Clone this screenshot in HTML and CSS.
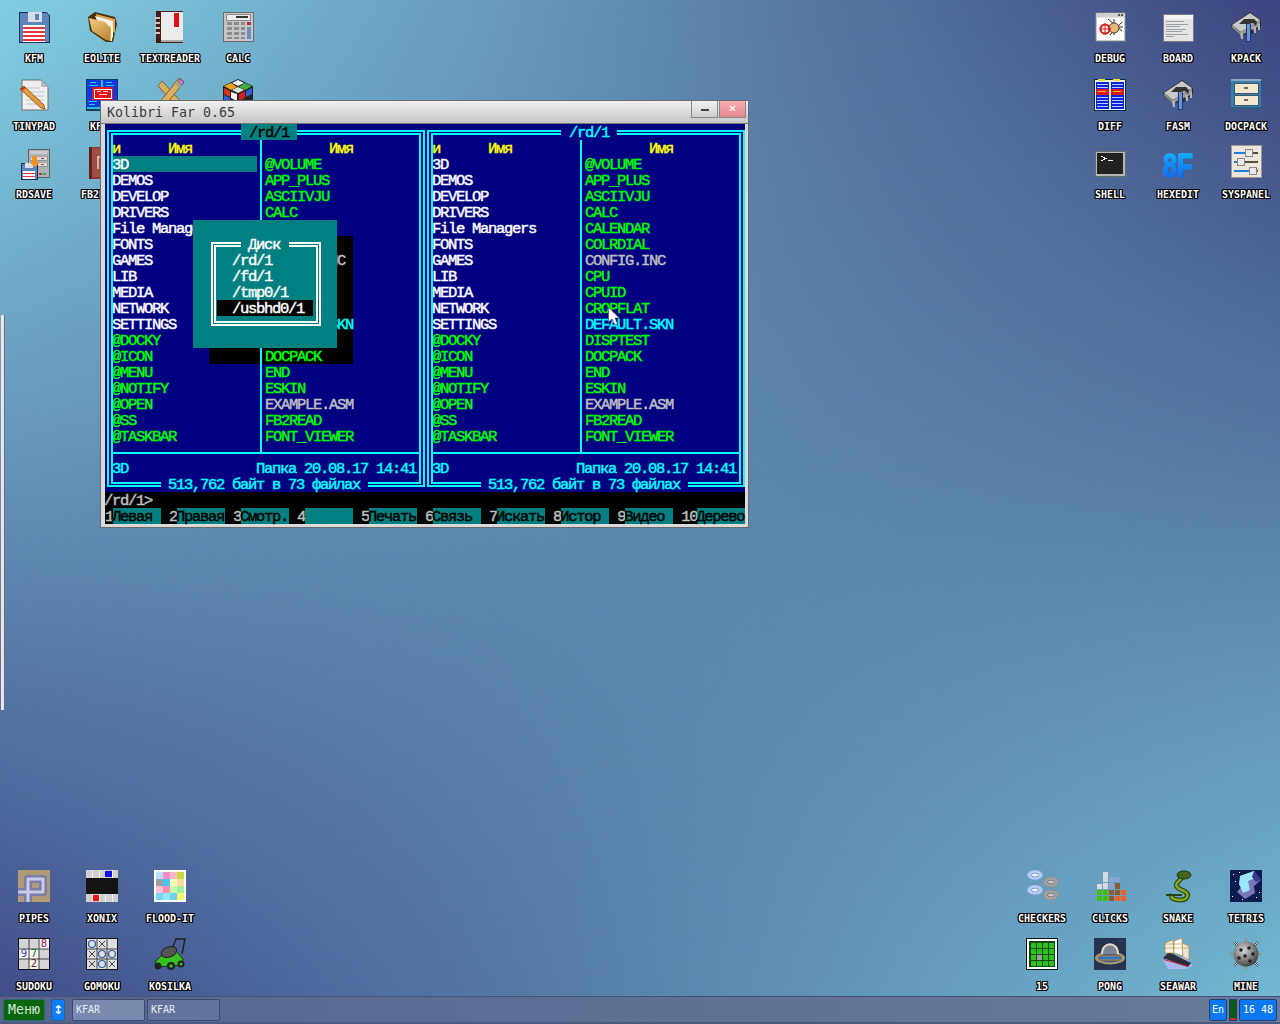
FILE: index.html
```html
<!DOCTYPE html>
<html lang="ru">
<head>
<meta charset="utf-8">
<title>KolibriOS</title>
<link rel="stylesheet" href="styles.css">
</head>
<body>
<div class="desktop">

<svg class="defs" width="0" height="0">
  <defs>
    <linearGradient id="gFolder" x1="0" y1="0" x2="0.6" y2="1"><stop offset="0" stop-color="#f2cf85"/><stop offset="1" stop-color="#c08a38"/></linearGradient>
    <linearGradient id="gHex" x1="0" y1="0" x2="0" y2="1"><stop offset="0" stop-color="#14c0ff"/><stop offset="1" stop-color="#0a58f0"/></linearGradient>
    <radialGradient id="gMine" cx="0.4" cy="0.35" r="0.7"><stop offset="0" stop-color="#d8d8d8"/><stop offset="1" stop-color="#3c3c3c"/></radialGradient>
    <radialGradient id="gBlue" cx="0.5" cy="0.5" r="0.6"><stop offset="0" stop-color="#ffffff"/><stop offset="1" stop-color="#8aa8e8"/></radialGradient>
    <radialGradient id="gGray" cx="0.5" cy="0.5" r="0.6"><stop offset="0" stop-color="#d0d0d0"/><stop offset="1" stop-color="#808080"/></radialGradient>
    <symbol id="hammer" viewBox="0 0 32 32">
      <path d="M1 14 L20 1 L31 9 L31 15 L26 19 L22 23 L12 24 L2 18 Z" fill="#2a2a2a"/>
      <path d="M2 14 L20 2 L30 9 L11 21 Z" fill="#c8c8c8"/>
      <path d="M2 14 L11 21 L11 24 L2 17 Z" fill="#8c8c8c"/>
      <path d="M11 21 L30 9 L30 15 L11 24 Z" fill="#9a9a9a"/>
      <path d="M9 13 L14 8 L24 8 L27 11 L26 15 L23 12 L19 13 L14 13 Z" fill="#333"/>
      <rect x="16" y="13" width="5" height="18" fill="#1c3a78"/>
      <rect x="17" y="13" width="3" height="17" fill="#6a94d8"/>
      <path d="M10 22 h3 v6 h-2 z M23 16 h3 v6 h-2 z M28 13 h2 v6 h-2 z" fill="#b4b4b4"/>
    </symbol>
  </defs>
</svg>

<div class="strip"></div>

<!-- top left -->
<div class="icons icons-tl">
  <div class="icon">
    <svg class="ico" viewBox="0 0 32 32" shape-rendering="crispEdges"><path d="M1 1 H28 L31 4 V31 H1 Z" fill="#5c84bd" stroke="#17315c"/><rect x="10" y="1" width="14" height="10" fill="#d8dde6"/><rect x="17" y="3" width="4" height="6" fill="#5c84bd"/><rect x="5" y="14" width="22" height="17" fill="#fff"/><path d="M5 16h22v2H5zM5 20h22v2H5zM5 24h22v2H5zM5 28h22v2H5z" fill="#e5343a"/></svg>
    <span class="label">KFM</span>
  </div>
  <div class="icon">
    <svg class="ico" viewBox="0 0 32 32"><path d="M2 6 L9 1 L13 2 L29 6 L31 13 L27 31 L20 31 L4 20 Z" fill="#4c3008"/><path d="M10 3 L29 8 L29 22 L12 14 Z" fill="#d9a655"/><path d="M9 5 L27 10 L27 27 L12 12 Z" fill="#f6f3e6"/><path d="M3 7 L19 11 L25 17 L25 30 L20 29 L6 20 Z" fill="url(#gFolder)"/><path d="M25 15 L27 17 L26 30 L24.500 30 Z" fill="#fff8e0"/></svg>
    <span class="label">EOLITE</span>
  </div>
  <div class="icon">
    <svg class="ico" viewBox="0 0 32 32" shape-rendering="crispEdges"><rect x="2" y="0" width="27" height="32" fill="#4a1a14"/><rect x="7" y="1" width="22" height="28" fill="#ececec"/><rect x="7" y="29" width="22" height="2" fill="#a8a8a8"/><rect x="20" y="2" width="5" height="14" fill="#e3101a"/><path d="M1 6h5v2H1zM1 11h5v2H1zM1 16h5v2H1zM1 21h5v2H1z" fill="#c8c8c8"/></svg>
    <span class="label">TEXTREADER</span>
  </div>
  <div class="icon">
    <svg class="ico" viewBox="0 0 32 32" shape-rendering="crispEdges"><rect x="1" y="1" width="30" height="29" fill="#c6c6c6" stroke="#6c6c6c"/><rect x="4" y="3" width="24" height="6" fill="#ececec" stroke="#8a8a8a"/><rect x="14" y="5" width="12" height="2" fill="#333"/><path d="M5 11h5v3H5zM12 11h5v3h-5zM5 16h5v3H5zM12 16h5v3h-5zM5 21h5v3H5zM12 21h5v3h-5zM5 26h5v2H5zM12 26h5v2h-5zM19 16h4v3h-4zM19 21h4v3h-4zM19 26h4v2h-4zM19 11h4v3h-4z" fill="#8c8c8c"/><rect x="25" y="11" width="4" height="3" fill="#b83030"/><rect x="25" y="16" width="4" height="12" fill="#6a90c8"/></svg>
    <span class="label">CALC</span>
  </div>
  <div class="icon">
    <svg class="ico" viewBox="0 0 32 32"><path d="M4 1 H23 L30 8 V31 H4 Z" fill="#efefef" stroke="#707070"/><path d="M23 1 V8 H30 Z" fill="#bdbdbd"/><path d="M8 9H22M8 13H26M8 17H26M8 21H26M8 25H26" stroke="#c4c4c4"/><path d="M2 10 L6 7 L26 26 L27 30 L23 29 Z" fill="#e89a3a" stroke="#7a4a18" stroke-width=".8"/><path d="M2 10 L6 7 L8 9 L4 12 Z" fill="#c84030"/></svg>
    <span class="label">TINYPAD</span>
  </div>
  <div class="icon">
    <svg class="ico" viewBox="0 0 32 32" shape-rendering="crispEdges"><rect x="0" y="0" width="32" height="32" fill="#0a3f5a"/><rect x="1" y="1" width="30" height="29" fill="#0c38e8"/><path d="M15 1h2v29h-2z" fill="#22c0e0"/><path d="M1 28h30v2H1z" fill="#22c0d0"/><path d="M4 3h6v1H4zM20 3h6v1h-6zM3 6h9v1H3zM20 6h8v1h-8zM3 22h8v1H3zM21 22h8v1h-8zM3 25h6v1H3z" fill="#20d0e0"/><rect x="6" y="8" width="21" height="13" fill="#e21818"/><rect x="8" y="10" width="17" height="9" fill="none" stroke="#fff"/><path d="M11 12h4v1h-4zM17 12h5v1h-5zM13 15h8v1h-8z" fill="#ffd0d0"/></svg>
    <span class="label">KFAR</span>
  </div>
  <div class="icon">
    <svg class="ico" viewBox="0 0 32 32"><path d="M4 7 L8 2 L30 26 L26 31 Z" fill="#d8b060" stroke="#6c4c18" stroke-width=".8"/><path d="M30 3 L25 -1 L5 24 L3 31 L10 28 Z" fill="#d8b060" stroke="#6c4c18" stroke-width=".8"/><path d="M30 3 L26 0 L24 3 L28 6 Z" fill="#d080d0" stroke="#503050" stroke-width=".6"/><path d="M24 3 L28 6 L26 9 L22 6 Z" fill="#a0a0a0"/></svg>
    <span class="label">DEVELOP</span>
  </div>
  <div class="icon">
    <svg class="ico" viewBox="0 0 32 32"><path d="M16 0 L31 7 V24 L16 32 L1 24 V7 Z" fill="#222"/><path d="M16 1 L22 4 L16 7 L10 4 Z" fill="#f4f4f4"/><path d="M23 4 L30 7 L23 11 L17 8 Z" fill="#40b040"/><path d="M9 4 L15 8 L9 11 L2 7 Z" fill="#f0a020"/><path d="M16 8 L22 11 L16 14 L10 11 Z" fill="#d8e8d8"/><path d="M2 9 L8 12 V18 L2 15 Z" fill="#e03020"/><path d="M9 13 L15 15 V22 L9 19 Z" fill="#f4f4f4"/><path d="M17 15 L23 12 V19 L17 22 Z" fill="#d02020"/><path d="M24 12 L30 9 V15 L24 18 Z" fill="#3060d0"/><path d="M2 16 L8 19 V24 L2 21 Z" fill="#3060d0"/></svg>
    <span class="label">DEVELOP</span>
  </div>
  <div class="icon">
    <svg class="ico" viewBox="0 0 32 32" shape-rendering="crispEdges"><rect x="10" y="2" width="21" height="28" fill="#aeb2b6" stroke="#5c6268"/><rect x="12" y="4" width="17" height="3" fill="#c8ccd0"/><rect x="12" y="9" width="17" height="4" fill="#d8dadc" stroke="#70757a" stroke-width=".5"/><rect x="12" y="15" width="17" height="4" fill="#d8dadc" stroke="#70757a" stroke-width=".5"/><path d="M23 11h3v1h-3zM23 17h3v1h-3z" fill="#c03030"/><rect x="21" y="26" width="3" height="2" fill="#c03030"/><rect x="25" y="26" width="3" height="2" fill="#30b040"/><path d="M3 16H17L19 18V32H3Z" fill="#5c84bd" stroke="#17315c"/><rect x="7" y="16" width="8" height="5" fill="#d8dde6"/><rect x="5" y="24" width="12" height="8" fill="#fff"/><path d="M5 26h12v1H5zM5 29h12v1H5z" fill="#e5343a"/><path d="M14 9h5v6h3l-5 6-5-6h2z" fill="#f09020"/></svg>
    <span class="label">RDSAVE</span>
  </div>
  <div class="icon">
    <svg class="ico" viewBox="0 0 32 32" shape-rendering="crispEdges"><rect x="3" y="0" width="26" height="32" fill="#8a3c32"/><rect x="5" y="1" width="22" height="29" fill="#a04c40"/><rect x="3" y="0" width="3" height="32" fill="#5c221c"/><rect x="11" y="9" width="7" height="2" fill="#e0b0a0"/><rect x="11" y="9" width="2" height="13" fill="#e0b0a0"/></svg>
    <span class="label">FB2READ</span>
  </div>
</div>

<!-- top right -->
<div class="icons icons-tr">
  <div class="icon">
    <svg class="ico" viewBox="0 0 32 32"><rect x="2" y="2" width="29" height="28" fill="#fff" stroke="#8a8a8a"/><rect x="2.500" y="2.500" width="28" height="4" fill="#cfcfcf"/><rect x="24" y="3" width="2" height="2" fill="#555"/><rect x="27" y="3" width="2" height="2" fill="#555"/><path d="M14 8 L28 20 M28 11 L16 24 M20 8 V24 M14 16 H29" stroke="#222" stroke-width="1"/><ellipse cx="20" cy="17" rx="5" ry="5" fill="#e0b878" stroke="#5a3c18"/><circle cx="11" cy="18" r="4.500" fill="none" stroke="#e01818" stroke-width="2"/><path d="M11 12 V24 M5 18 H17" stroke="#e01818"/></svg>
    <span class="label">DEBUG</span>
  </div>
  <div class="icon">
    <svg class="ico" viewBox="0 0 32 32" shape-rendering="crispEdges"><rect x="1" y="3" width="30" height="27" fill="#e4e4e4" stroke="#7c7c7c"/><rect x="1.500" y="3.500" width="29" height="4" fill="#f4f4f4"/><path d="M4 10h18v1H4zM4 13h22v1H4zM4 15h14v1H4zM4 18h20v1H4zM4 20h16v1H4zM4 23h22v1H4zM4 25h8v1H4z" fill="#9aa0aa"/></svg>
    <span class="label">BOARD</span>
  </div>
  <div class="icon">
    <svg class="ico"><use href="#hammer"/></svg>
    <span class="label">KPACK</span>
  </div>
  <div class="icon">
    <svg class="ico" viewBox="0 0 32 32" shape-rendering="crispEdges"><rect x="0" y="0" width="32" height="32" fill="#0a2a4a"/><rect x="1" y="1" width="30" height="30" fill="#e8f0f8"/><rect x="2" y="3" width="13" height="27" fill="#0c20e0"/><rect x="17" y="3" width="13" height="27" fill="#0c20e0"/><path d="M4 0h7v2H4zM19 0h7v2h-7z" fill="#e8e020"/><rect x="2" y="10" width="13" height="6" fill="#e01818"/><rect x="17" y="10" width="13" height="6" fill="#e01818"/><path d="M3 5h11v1H3zM18 5h11v1H18zM3 8h11v1H3zM18 8h11v1H18zM3 18h11v1H3zM18 18h11v1H18zM3 21h11v1H3zM18 21h11v1H18zM3 24h11v1H3zM18 24h11v1H18zM3 27h11v1H3zM18 27h11v1H18z" fill="#b8d0ff"/><path d="M4 12h8v1H4zM19 12h8v1h-8z" fill="#f0c020"/></svg>
    <span class="label">DIFF</span>
  </div>
  <div class="icon">
    <svg class="ico"><use href="#hammer"/></svg>
    <span class="label">FASM</span>
  </div>
  <div class="icon">
    <svg class="ico" viewBox="0 0 32 32" shape-rendering="crispEdges"><rect x="1" y="0" width="30" height="30" fill="#3c7ca8"/><rect x="1" y="0" width="30" height="2" fill="#88a8c0"/><rect x="1" y="28" width="30" height="2" fill="#2c5c80"/><path d="M3 30h4v2H3zM25 30h4v2h-4z" fill="#2c5c80"/><rect x="4" y="4" width="24" height="10" fill="#f2e8d0" stroke="#3a5870"/><rect x="4" y="16" width="24" height="10" fill="#f2e8d0" stroke="#3a5870"/><rect x="14" y="8" width="4" height="2" fill="#6a6a6a"/><rect x="14" y="20" width="4" height="2" fill="#6a6a6a"/></svg>
    <span class="label">DOCPACK</span>
  </div>
  <div class="icon">
    <svg class="ico" viewBox="0 0 32 32" shape-rendering="crispEdges"><rect x="1" y="4" width="30" height="25" fill="#b6b6b6" stroke="#6a6a6a"/><rect x="3" y="6" width="26" height="21" fill="#222"/><path d="M7 9h2v1h2v1h2v1h-2v1H9v1H7v-1h2v-1h1v-1H9v-1H7zM14 13h5v1h-5z" fill="#f4f4f4"/></svg>
    <span class="label">SHELL</span>
  </div>
  <div class="icon">
    <svg class="ico" viewBox="0 0 32 32"><text class="hex-logo" x="1" y="30" textLength="30" lengthAdjust="spacingAndGlyphs" fill="url(#gHex)" stroke="url(#gHex)">8F</text></svg>
    <span class="label">HEXEDIT</span>
  </div>
  <div class="icon">
    <svg class="ico" viewBox="0 0 32 32" shape-rendering="crispEdges"><rect x="1" y="-2" width="30" height="32" fill="#ece6dc" stroke="#a09a90"/><rect x="4" y="5" width="24" height="2" fill="#5a4a3a"/><rect x="4" y="5" width="13" height="2" fill="#1c80e0"/><rect x="4" y="14" width="24" height="2" fill="#5a4a3a"/><rect x="4" y="14" width="6" height="2" fill="#1c80e0"/><rect x="4" y="23" width="24" height="2" fill="#5a4a3a"/><rect x="4" y="23" width="17" height="2" fill="#1c80e0"/><rect x="15" y="2" width="7" height="7" fill="#e8e8e8" stroke="#8a8a8a"/><rect x="7" y="11" width="7" height="7" fill="#e8e8e8" stroke="#8a8a8a"/><rect x="19" y="20" width="7" height="7" fill="#e8e8e8" stroke="#8a8a8a"/></svg>
    <span class="label">SYSPANEL</span>
  </div>
</div>

<!-- bottom left -->
<div class="icons icons-bl">
  <div class="icon">
    <svg class="ico" viewBox="0 0 32 32"><rect width="32" height="32" fill="#ae9a74"/><path d="M10 32 V9 H25 V22 H0" fill="none" stroke="#7a7ea6" stroke-width="8" stroke-linejoin="round"/><path d="M10 32 V9 H25 V22 H0" fill="none" stroke="#c8cce8" stroke-width="3" stroke-linejoin="round"/></svg>
    <span class="label">PIPES</span>
  </div>
  <div class="icon">
    <svg class="ico" viewBox="0 0 32 32" shape-rendering="crispEdges"><rect width="32" height="32" fill="#d0d0d0"/><rect y="8" width="32" height="16" fill="#141414"/><path d="M6.500 0v8M13 0v8M19.500 0v8M26 0v8M6.500 24v8M13 24v8M19.500 24v8M26 24v8" stroke="#f4f4f4"/><rect x="19" y="1" width="7" height="6" fill="#1010f0"/><rect x="7" y="25" width="6" height="6" fill="#f01010"/></svg>
    <span class="label">XONIX</span>
  </div>
  <div class="icon">
    <svg class="ico" viewBox="0 0 32 32" shape-rendering="crispEdges"><rect width="32" height="32" fill="#fff"/><path d="M2 2h7v7H2z" fill="#b8e0ff"/><path d="M9 2h7v7H9z" fill="#ff90c0"/><path d="M16 2h7v7h-7z" fill="#ffb8d0"/><path d="M23 2h7v7h-7z" fill="#c8d840"/><path d="M2 9h7v7H2z" fill="#a0a0a0"/><path d="M9 9h7v7H9z" fill="#40c8f8"/><path d="M16 9h7v7h-7z" fill="#ffffb0"/><path d="M23 9h7v7h-7z" fill="#ffd8a0"/><path d="M2 16h7v7H2z" fill="#ffc0d8"/><path d="M9 16h7v7H9z" fill="#ff90b0"/><path d="M16 16h7v7h-7z" fill="#c0ffb0"/><path d="M23 16h7v7h-7z" fill="#a0f0a0"/><path d="M2 23h7v7H2z" fill="#70d8f0"/><path d="M9 23h7v7H9z" fill="#90e8f8"/><path d="M16 23h7v7h-7z" fill="#70d0f0"/><path d="M23 23h7v7h-7z" fill="#f8f870"/></svg>
    <span class="label">FLOOD-IT</span>
  </div>
  <div class="icon">
    <svg class="ico" viewBox="0 0 32 32"><rect width="32" height="32" fill="#101010"/><rect x="1" y="1" width="30" height="30" fill="#f4f4f4"/><path d="M1 1h10v10H1zM21 11h10v10H21zM1 21h10v10H1zM21 21h10v10H21zM11 1h10v10H11z" fill="#d4d4d4"/><path d="M11 0v32M21 0v32M0 11h32M0 21h32" stroke="#404040"/><text class="sudoku" x="26" y="9" fill="#a02050">8</text><text class="sudoku" x="6" y="19" fill="#3050a0">9</text><text class="sudoku" x="16" y="19" fill="#207030">7</text><text class="sudoku" x="16" y="29" fill="#802020">2</text></svg>
    <span class="label">SUDOKU</span>
  </div>
  <div class="icon">
    <svg class="ico" viewBox="0 0 32 32"><rect width="32" height="32" fill="#101010"/><rect x="1" y="1" width="30" height="30" fill="#dedede"/><path d="M11 0v32M21 0v32M0 11h32M0 21h32" stroke="#404040"/><g fill="none" stroke="#2c5ca8" stroke-width="1.200"><circle cx="6" cy="6" r="3.500"/><circle cx="16" cy="16" r="3.500"/><circle cx="26" cy="16" r="3.500"/><circle cx="16" cy="26" r="3.500"/></g><path d="M13 3l6 6m0-6l-6 6M3 13l6 6m0-6l-6 6M3 23l6 6m0-6l-6 6M23 23l6 6m0-6l-6 6" stroke="#404040" fill="none"/></svg>
    <span class="label">GOMOKU</span>
  </div>
  <div class="icon">
    <svg class="ico" viewBox="0 0 32 32"><path d="M17 14 L22 1 H31 L28 16" fill="none" stroke="#222" stroke-width="1.500"/><path d="M1 24 L11 14 L22 13 L29 21 L28 27 L3 29 Z" fill="#38c020" stroke="#0c3c0c"/><ellipse cx="15" cy="14" rx="8" ry="5" fill="#555" stroke="#222" transform="rotate(-20 15 14)"/><circle cx="4" cy="28" r="3.500" fill="#222"/><circle cx="17" cy="28" r="4" fill="#222"/><circle cx="17" cy="28" r="1.800" fill="#38c020"/><circle cx="27" cy="26" r="3.500" fill="#222"/><circle cx="27" cy="26" r="1.500" fill="#38c020"/></svg>
    <span class="label">KOSILKA</span>
  </div>
</div>

<!-- bottom right -->
<div class="icons icons-br">
  <div class="icon">
    <svg class="ico" viewBox="0 0 32 32"><ellipse cx="9" cy="5" rx="8" ry="5" fill="url(#gBlue)"/><ellipse cx="9" cy="5" rx="4" ry="2" fill="none" stroke="#7a98d8"/><ellipse cx="9" cy="20" rx="8" ry="5" fill="url(#gBlue)"/><ellipse cx="9" cy="20" rx="4" ry="2" fill="none" stroke="#7a98d8"/><ellipse cx="25" cy="12" rx="8" ry="5.500" fill="url(#gGray)"/><ellipse cx="25" cy="12" rx="4" ry="2" fill="none" stroke="#777"/><ellipse cx="25" cy="25" rx="8" ry="5.500" fill="url(#gGray)"/><ellipse cx="25" cy="25" rx="4" ry="2" fill="none" stroke="#777"/></svg>
    <span class="label">CHECKERS</span>
  </div>
  <div class="icon">
    <svg class="ico" viewBox="0 0 32 32" shape-rendering="crispEdges"><path d="M9 2h5v5H9zM9 7h5v5H9zM3 14h5v5H3zM9 13h5v6H9z" fill="#d8d8d8"/><path d="M15 7h5v5h-5zM21 7h5v5h-5zM15 13h5v6h-5z" fill="#8aa4d8"/><path d="M21 13h5v6h-5zM15 20h5v5h-5zM15 26h5v5h-5zM21 20h5v5h-5z" fill="#8a5c30"/><path d="M3 20h5v5H3zM9 20h5v5H9zM3 26h5v5H3zM9 26h5v5H9z" fill="#40c000"/><path d="M27 20h5v5h-5zM21 26h5v5h-5zM27 26h5v5h-5z" fill="#f06020"/></svg>
    <span class="label">CLICKS</span>
  </div>
  <div class="icon">
    <svg class="ico" viewBox="0 0 32 32"><path d="M10 24 C8 28 12 30 18 30 C26 30 28 24 22 21 C14 18 12 15 17 11 C19 9 20 7 20 7" fill="none" stroke="#2a4a10" stroke-width="5"/><path d="M10 24 C8 28 12 30 18 30 C26 30 28 24 22 21 C14 18 12 15 17 11 C19 9 20 7 20 7" fill="none" stroke="#88a828" stroke-width="2.500"/><ellipse cx="22" cy="5" rx="7" ry="4" fill="#3c6a18" stroke="#1c3408"/><circle cx="24" cy="4" r="1" fill="#e02020"/><path d="M4 25 H20" stroke="#284010" stroke-width="2"/></svg>
    <span class="label">SNAKE</span>
  </div>
  <div class="icon">
    <svg class="ico" viewBox="0 0 32 32"><rect width="32" height="32" fill="#0c1c50"/><path d="M3 4h1v1H3zM9 2h1v1H9zM5 11h1v1H5zM2 26h1v1H2zM26 27h1v1h-1zM12 29h1v1h-1zM29 22h1v1h-1z" fill="#fff"/><path d="M10 6 L24 1 L31 10 L24 16 L25 23 L15 29 L7 22 L13 15 Z" fill="#7a78b8"/><path d="M10 6 L24 1 L26 8 L18 11 L20 20 L13 23 L9 14 Z" fill="#9ae8fa"/><path d="M24 1 L31 10 L26 12 L22 7 Z" fill="#3a3a88"/></svg>
    <span class="label">TETRIS</span>
  </div>
  <div class="icon">
    <svg class="ico" viewBox="0 0 32 32" shape-rendering="crispEdges"><rect width="32" height="32" fill="#101010"/><rect x="1" y="1" width="30" height="30" fill="#fff"/><rect x="3" y="3" width="26" height="26" fill="#0c4a10"/><g fill="#30c020"><rect x="5" y="5" width="5" height="5"/><rect x="11" y="5" width="5" height="5"/><rect x="17" y="5" width="5" height="5"/><rect x="23" y="5" width="5" height="5"/><rect x="5" y="11" width="5" height="5"/><rect x="11" y="11" width="5" height="5"/><rect x="17" y="11" width="5" height="5"/><rect x="23" y="11" width="5" height="5"/><rect x="5" y="17" width="5" height="5"/><rect x="17" y="17" width="5" height="5"/><rect x="23" y="17" width="5" height="5"/><rect x="5" y="23" width="5" height="5"/><rect x="11" y="23" width="5" height="5"/><rect x="17" y="23" width="5" height="5"/><rect x="23" y="23" width="5" height="5"/></g><rect x="11" y="17" width="5" height="5" fill="#a0a0a0"/></svg>
    <span class="label">15</span>
  </div>
  <div class="icon">
    <svg class="ico" viewBox="0 0 32 32"><rect width="32" height="32" fill="#263450"/><ellipse cx="16" cy="20" rx="15" ry="6.500" fill="#a89a78"/><ellipse cx="16" cy="20" rx="12" ry="4.500" fill="#50607c"/><path d="M8 16 C8 3 24 3 24 16" fill="#7a8498" stroke="#e8dcc0" stroke-width="2"/><rect x="4" y="18" width="24" height="4" fill="#2a78c8" stroke="#c8802c"/></svg>
    <span class="label">PONG</span>
  </div>
  <div class="icon">
    <svg class="ico" viewBox="0 0 32 32"><path d="M1 22 L6 31 H24 L31 28 L24 20 L10 17 Z" fill="#a8b8f0"/><path d="M1 20 L26 29 L29 25 L7 14 Z" fill="#2c2c3c"/><path d="M2 21 L26 28 L26 29 L2 22 Z" fill="#d02030"/><path d="M3 5 L11 2 L12 15 L3 15 Z" fill="#f4efe0" stroke="#b08a40" stroke-width=".7"/><path d="M12 3 L20 0 L21 18 L12 15 Z" fill="#fffdf4" stroke="#b08a40" stroke-width=".7"/><path d="M20 5 L27 8 L27 22 L21 19 Z" fill="#ece4d0" stroke="#b08a40" stroke-width=".7"/><path d="M3 10H27M3 6H20" stroke="#b08a40" stroke-width=".6"/></svg>
    <span class="label">SEAWAR</span>
  </div>
  <div class="icon">
    <svg class="ico" viewBox="0 0 32 32"><path d="M16 0V32M0 16H32M4 4L28 28M28 4L4 28" stroke="#383838" stroke-width="2"/><path d="M16 0V4M0 16H4M28 16H32M16 28V32M4 4L7 7M28 4L25 7M4 28L7 25M28 28L25 25" stroke="#eee" stroke-width="1"/><circle cx="16" cy="16" r="12.500" fill="url(#gMine)"/><circle cx="11" cy="12" r="1.800" fill="#222"/><circle cx="19" cy="10" r="1.800" fill="#222"/><circle cx="23" cy="16" r="1.800" fill="#222"/><circle cx="15" cy="18" r="1.800" fill="#222"/><circle cx="9" cy="20" r="1.800" fill="#222"/><circle cx="20" cy="23" r="1.800" fill="#222"/></svg>
    <span class="label">MINE</span>
  </div>
</div>

<!-- window -->
<section class="window">
  <header class="titlebar">
    <span class="title">Kolibri Far 0.65</span>
    <div class="win-buttons">
      <span class="win-btn win-min"><i class="min-glyph"></i></span>
      <span class="win-btn win-close">✕</span>
    </div>
  </header>
  <div class="terminal">
    <div class="panels">
      <div class="shadow"></div>

      <div class="panel">
        <div class="frame"><div class="frame-inner">
          <div class="cols">
            <div class="col">
              <div class="head">и      Имя</div>
              <div class="row dir sel">3D</div>
              <div class="row dir">DEMOS</div>
              <div class="row dir">DEVELOP</div>
              <div class="row dir">DRIVERS</div>
              <div class="row dir">File Managers</div>
              <div class="row dir">FONTS</div>
              <div class="row dir">GAMES</div>
              <div class="row dir">LIB</div>
              <div class="row dir">MEDIA</div>
              <div class="row dir">NETWORK</div>
              <div class="row dir">SETTINGS</div>
              <div class="row">@DOCKY</div>
              <div class="row">@ICON</div>
              <div class="row">@MENU</div>
              <div class="row">@NOTIFY</div>
              <div class="row">@OPEN</div>
              <div class="row">@SS</div>
              <div class="row">@TASKBAR</div>
            </div>
            <div class="col col-right">
              <div class="head">        Имя</div>
              <div class="row">@VOLUME</div>
              <div class="row">APP_PLUS</div>
              <div class="row">ASCIIVJU</div>
              <div class="row">CALC</div>
              <div class="row">CALENDAR</div>
              <div class="row">COLRDIAL</div>
              <div class="row txt">CONFIG.INC</div>
              <div class="row">CPU</div>
              <div class="row">CPUID</div>
              <div class="row">CROPFLAT</div>
              <div class="row skn">DEFAULT.SKN</div>
              <div class="row">DISPTEST</div>
              <div class="row">DOCPACK</div>
              <div class="row">END</div>
              <div class="row">ESKIN</div>
              <div class="row txt">EXAMPLE.ASM</div>
              <div class="row">FB2READ</div>
              <div class="row">FONT_VIEWER</div>
            </div>
          </div>
          <div class="info"><span>3D</span><span>Папка 20.08.17 14:41</span></div>
        </div></div>
        <div class="panel-title active">/rd/1</div>
        <div class="panel-sum"> 513,762 байт в 73 файлах </div>
      </div>

      <div class="panel">
        <div class="frame"><div class="frame-inner">
          <div class="cols">
            <div class="col">
              <div class="head">и      Имя</div>
              <div class="row dir">3D</div>
              <div class="row dir">DEMOS</div>
              <div class="row dir">DEVELOP</div>
              <div class="row dir">DRIVERS</div>
              <div class="row dir">File Managers</div>
              <div class="row dir">FONTS</div>
              <div class="row dir">GAMES</div>
              <div class="row dir">LIB</div>
              <div class="row dir">MEDIA</div>
              <div class="row dir">NETWORK</div>
              <div class="row dir">SETTINGS</div>
              <div class="row">@DOCKY</div>
              <div class="row">@ICON</div>
              <div class="row">@MENU</div>
              <div class="row">@NOTIFY</div>
              <div class="row">@OPEN</div>
              <div class="row">@SS</div>
              <div class="row">@TASKBAR</div>
            </div>
            <div class="col col-right">
              <div class="head">        Имя</div>
              <div class="row">@VOLUME</div>
              <div class="row">APP_PLUS</div>
              <div class="row">ASCIIVJU</div>
              <div class="row">CALC</div>
              <div class="row">CALENDAR</div>
              <div class="row">COLRDIAL</div>
              <div class="row txt">CONFIG.INC</div>
              <div class="row">CPU</div>
              <div class="row">CPUID</div>
              <div class="row">CROPFLAT</div>
              <div class="row skn">DEFAULT.SKN</div>
              <div class="row">DISPTEST</div>
              <div class="row">DOCPACK</div>
              <div class="row">END</div>
              <div class="row">ESKIN</div>
              <div class="row txt">EXAMPLE.ASM</div>
              <div class="row">FB2READ</div>
              <div class="row">FONT_VIEWER</div>
            </div>
          </div>
          <div class="info"><span>3D</span><span>Папка 20.08.17 14:41</span></div>
        </div></div>
        <div class="panel-title">/rd/1</div>
        <div class="panel-sum"> 513,762 байт в 73 файлах </div>
      </div>

      <div class="popup">
        <div class="pop-frame"><div class="pop-inner">
          <div class="pop-item">/rd/1</div>
          <div class="pop-item">/fd/1</div>
          <div class="pop-item">/tmp0/1</div>
          <div class="pop-item pop-sel">/usbhd0/1</div>
        </div></div>
        <div class="pop-title">Диск</div>
      </div>
    </div>

    <div class="prompt">/rd/1&gt;</div>
    <div class="keybar">
      <div class="key"><b>1</b><span>Левая</span></div>
      <div class="key"><b>2</b><span>Правая</span></div>
      <div class="key"><b>3</b><span>Смотр.</span></div>
      <div class="key"><b>4</b><span></span></div>
      <div class="key"><b>5</b><span>Печать</span></div>
      <div class="key"><b>6</b><span>Связь</span></div>
      <div class="key"><b>7</b><span>Искать</span></div>
      <div class="key"><b>8</b><span>Истор</span></div>
      <div class="key"><b>9</b><span>Видео</span></div>
      <div class="key"><b>10</b><span>Дерево</span></div>
    </div>
  </div>
</section>

<svg class="cursor" viewBox="0 0 12 19"><path d="M0.500 0.500 V15 L4 12 L7 18 L9.500 17 L7 11 H11.500 Z" fill="#fff" stroke="#555" stroke-width=".7"/></svg>

<!-- taskbar -->
<footer class="taskbar">
  <div class="menu-btn">Меню</div>
  <div class="arrow-btn">↕</div>
  <div class="task task-active">KFAR</div>
  <div class="task">KFAR</div>
  <div class="tray">
    <div class="tray-lang">En</div>
    <div class="tray-ind"></div>
    <div class="tray-clock">16 48</div>
  </div>
</footer>

</div>
</body>
</html>
```
FILE: styles.css
```css
* { box-sizing: border-box; }
html, body { margin: 0; padding: 0; }
body { width: 1280px; height: 1024px; overflow: hidden; }

.desktop {
  position: relative;
  width: 1280px;
  height: 1024px;
  overflow: hidden;
  display: flex;
  flex-direction: column;
  background: linear-gradient(to right, #82d0e2, #3d4580);
}
.desktop::before {
  content: "";
  position: absolute;
  inset: 0;
  background: linear-gradient(to right, #3f4a88, #74bcd4);
  -webkit-mask-image: linear-gradient(to bottom, transparent, #000);
  mask-image: linear-gradient(to bottom, transparent, #000);
}
.defs { position: absolute; }

.strip {
  position: absolute;
  left: 1px;
  top: 315px;
  width: 4px;
  height: 395px;
  background: #ece4e4;
  border-right: 1px solid #6c6c74;
}

/* desktop icons */
.icons {
  position: absolute;
  display: grid;
  grid-auto-rows: 68px;
}
.icons-tl { left: 0; top: 0; grid-template-columns: repeat(4, 68px); }
.icons-tr { right: 0; top: 0; grid-template-columns: repeat(3, 68px); }
.icons-bl { left: 0; top: 859px; grid-template-columns: repeat(3, 68px); }
.icons-br { right: 0; top: 859px; grid-template-columns: repeat(4, 68px); }
.icon {
  display: flex;
  flex-direction: column;
  align-items: center;
  padding-top: 11px;
}
.ico { width: 32px; height: 32px; display: block; overflow: visible; }
.label {
  margin-top: 9px;
  height: 14px;
  font: bold 10px/14px "DejaVu Sans Mono", monospace;
  color: #fff;
  white-space: nowrap;
  text-shadow: 1px 0 #000, -1px 0 #000, 0 1px #000, 0 -1px #000, 1px 1px #000, -1px 1px #000, 1px -1px #000, -1px -1px #000;
}
.icons-bl .label, .icons-br .label { margin-top: 10px; }
.hex-logo { font: 900 33px "Liberation Sans", sans-serif; stroke-width: 1.5; }
.sudoku { font: 10px "DejaVu Sans", sans-serif; text-anchor: middle; }

/* window */
.window {
  position: absolute;
  left: 100px;
  top: 100px;
  width: 649px;
  height: 428px;
  border: 1px solid #6a6a6a;
  background: #dadada;
  padding: 0 3px 3px 4px;
  display: flex;
  flex-direction: column;
}
.titlebar {
  height: 23px;
  flex: none;
  margin: 0 -3px 0 -4px;
  padding: 0 2px 0 6px;
  display: flex;
  align-items: flex-start;
  background: linear-gradient(to bottom, #f0f0f0, #c6c6c6);
  border-bottom: 1px solid #777;
}
.title {
  font: 13.3px/24px "DejaVu Sans Mono", monospace;
  color: #3c3c3c;
}
.win-buttons { margin-left: auto; display: flex; gap: 1px; }
.win-btn {
  width: 27px;
  height: 17px;
  border: 1px solid #888;
  border-top: 0;
  display: flex;
  align-items: center;
  justify-content: center;
}
.win-min { background: linear-gradient(to bottom, #f2f2f2, #cfcfcf); }
.min-glyph { display: block; width: 8px; height: 2px; background: #444; margin-top: 2px; }
.win-close {
  background: linear-gradient(to bottom, #f6aeb2, #e4878e);
  color: #fff;
  font: bold 10px/1 "DejaVu Sans", sans-serif;
}

/* terminal */
.terminal {
  width: 640px;
  height: 400px;
  flex: none;
  background: #000;
  position: relative;
  font: 15.5px/16px "Liberation Mono", monospace;
  letter-spacing: -1.3px;
  -webkit-text-stroke: 0.45px currentColor;
  text-indent: -1px;
  display: flex;
  flex-direction: column;
}
.head, .row, .info span, .panel-title, .panel-sum, .pop-item, .pop-title, .prompt, .key b, .key span {
  white-space: pre;
  padding-top: 1px;
}
.panels {
  position: relative;
  height: 368px;
  flex: none;
  display: flex;
  background: #000080;
}
.shadow {
  position: absolute;
  left: 104px;
  top: 112px;
  width: 144px;
  height: 128px;
  background: #000;
}
.panel {
  position: relative;
  z-index: 1;
  width: 320px;
  height: 368px;
  padding: 6px 0 0 2px;
}
.frame {
  width: 318px;
  height: 357px;
  border: 2px solid #00ffff;
  padding: 1px 2px;
}
.frame-inner {
  height: 351px;
  border: 2px solid #00ffff;
  display: flex;
  flex-direction: column;
}
.cols {
  height: 319px;
  flex: none;
  display: grid;
  grid-template-columns: 147px 1fr;
  border-bottom: 2px solid #00ffff;
}
.col { padding-top: 5px; min-width: 0; }
.col:first-child { overflow: hidden; }
.col-right { border-left: 2px solid #00ffff; padding-left: 4px; }
.head { height: 16px; color: #ffff00; }
.row { height: 16px; color: #00ff00; }
.dir { color: #fff; }
.txt { color: #c0c0c0; }
.skn { color: #00ffff; }
.sel { background: #008080; width: 144px; }
.info {
  margin-top: 6px;
  height: 16px;
  display: flex;
  justify-content: space-between;
  color: #00ffff;
  padding-right: 3px;
}
.panel-title {
  position: absolute;
  left: 136px;
  top: 0;
  width: 56px;
  height: 16px;
  padding-left: 9px;
  background: #000080;
  color: #00ffff;
}
.panel-title.active { background: #008080; color: #000; }
.panel-sum {
  position: absolute;
  left: 56px;
  top: 352px;
  height: 16px;
  background: #000080;
  color: #00ffff;
}

/* drive popup */
.popup {
  position: absolute;
  z-index: 2;
  left: 88px;
  top: 96px;
  width: 144px;
  height: 128px;
  background: #008080;
  padding: 22px 0 0 18px;
  color: #fff;
}
.pop-frame {
  width: 110px;
  height: 84px;
  border: 2px solid #fff;
  padding: 1px;
}
.pop-inner {
  height: 78px;
  border: 2px solid #fff;
  padding: 5px 0 0 1px;
}
.pop-item { width: 96px; height: 16px; padding-left: 16px; }
.pop-sel { background: #000; }
.pop-title {
  position: absolute;
  left: 48px;
  top: 16px;
  width: 48px;
  height: 16px;
  padding-left: 8px;
  background: #008080;
}

/* prompt + key bar */
.prompt { height: 16px; color: #c0c0c0; }
.keybar { height: 16px; display: flex; gap: 8px; }
.key { display: flex; height: 16px; }
.key b { flex: none; height: 16px; font-weight: normal; color: #c0c0c0; text-indent: 0; }
.key span { flex: none; width: 48px; height: 16px; background: #008080; color: #000; }

/* pointer */
.cursor {
  position: absolute;
  left: 608px;
  top: 307px;
  width: 12px;
  height: 19px;
  z-index: 5;
}

/* taskbar */
.taskbar {
  position: relative;
  margin-top: auto;
  height: 28px;
  display: flex;
  align-items: center;
  padding: 0 3px;
  background: linear-gradient(to right, #56648e, #6a7a9a);
  border-top: 1px solid #46527c;
  border-bottom: 2px solid #4c5a80;
  font: 10px/1 "DejaVu Sans Mono", monospace;
  color: #e8eef8;
}
.menu-btn {
  width: 42px;
  height: 22px;
  background: #0b660f;
  border: 1px solid #2f6a70;
  border-radius: 2px;
  font: 13.3px/20px "DejaVu Sans Mono", monospace;
  color: #cfe8cf;
  text-align: center;
}
.arrow-btn {
  margin-left: 6px;
  width: 14px;
  height: 22px;
  background: #0a7ef8;
  border: 1px solid #33588f;
  border-radius: 2px;
  font: bold 12px/20px "DejaVu Sans", sans-serif;
  color: #fff;
  text-align: center;
}
.task {
  width: 73px;
  height: 22px;
  margin-left: 2px;
  background: #63739a;
  border: 1px solid #3c4a72;
  border-radius: 2px;
  padding-left: 3px;
  line-height: 20px;
}
.task-active { margin-left: 7px; background: #7a8aae; }
.tray { margin-left: auto; display: flex; gap: 2px; }
.tray-lang, .tray-clock {
  height: 22px;
  background: #0a78f0;
  border: 1px solid #22406e;
  border-radius: 2px;
  text-align: center;
  line-height: 20px;
  color: #fff;
}
.tray-lang { width: 18px; }
.tray-clock { width: 38px; }
.tray-ind {
  width: 8px;
  height: 22px;
  background: linear-gradient(to bottom, #0a5c1c 90%, #c03030 90%);
  border: 1px solid #22406e;
}
```
